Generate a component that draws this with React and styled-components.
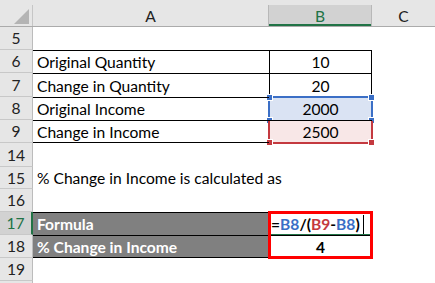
import React from 'react';
import styled, { createGlobalStyle } from "styled-components";

const Global = createGlobalStyle`
  html, body { margin: 0; padding: 0; background: #ffffff; }
  body { font-family: Lato, "Liberation Sans", sans-serif; }
`;

const COLS = "33px 236px 103px 1fr";

const rows = [
  { n: 5, h: 23 },
  { n: 6, h: 23, a: "Original Quantity", b: "10", boxed: true },
  { n: 7, h: 24, a: "Change in Quantity", b: "20", boxed: true },
  { n: 8, h: 23, a: "Original Income", b: "2000", boxed: true, sel: "blue" },
  { n: 9, h: 23, a: "Change in Income", b: "2500", boxed: true, sel: "red", last: true },
  { n: 14, h: 24 },
  { n: 15, h: 22, a: "% Change in Income is calculated as", spill: true },
  { n: 16, h: 23 },
  { n: 17, h: 23, a: "Formula", dark: true, formula: true, active: true },
  { n: 18, h: 23, a: "% Change in Income", b: "4", dark: true, bold: true, last: true },
  { n: 19, h: 23 },
];

function App() {
  return (
    <>
      <Global />
      <Sheet>
        <TopStrip />
        <HeaderRow>
          <Corner><Triangle /></Corner>
          <ColHead>A</ColHead>
          <ColHead $selected>B</ColHead>
          <ColHead $last>C</ColHead>
        </HeaderRow>
        {rows.map((r) => (
          <Row key={r.n} style={{ height: r.h }}>
            <RowHead $selected={r.active}>{r.n}</RowHead>
            <CellA $boxed={r.boxed || r.dark} $last={r.last} $dark={r.dark} $spill={r.spill}>
              {r.a}
            </CellA>
            <CellB $boxed={r.boxed || r.dark} $last={r.last} $sel={r.sel} $bold={r.bold}>
              {r.formula ? (
                <Formula>
                  =<Ref $c="#3a6fc6">B8</Ref>/(<Ref $c="#c4393f">B9</Ref>-<Ref $c="#3a6fc6">B8</Ref>)
                  <Caret />
                </Formula>
              ) : (
                r.b
              )}
              {r.sel === "blue" && (
                <Selection $color="#3b6fc6">
                  <Handle $color="#3b6fc6" $top $left />
                  <Handle $color="#3b6fc6" $top />
                  <Handle $color="#3b6fc6" $left />
                  <Handle $color="#3b6fc6" />
                </Selection>
              )}
              {r.sel === "red" && (
                <Selection $color="#c4393f" $noTop>
                  <Handle $color="#c4393f" $left />
                  <Handle $color="#c4393f" />
                </Selection>
              )}
              {r.active && (
                <>
                  <ActiveLine />
                  <RedBox />
                </>
              )}
            </CellB>
            <CellC />
          </Row>
        ))}
        <RowTail>
          <RowHead />
        </RowTail>
      </Sheet>
    </>
  );
}

export default App;

const Sheet = styled.div`
  width: 435px;
  height: 283px;
  overflow: hidden;
  font-size: 15.6px;
  color: #000;
`;

const TopStrip = styled.div`
  height: 5px;
  background: #e6e6e6;
`;

const HeaderRow = styled.div`
  display: grid;
  grid-template-columns: ${COLS};
  height: 22px;
  background: #e6e6e6;
  border-bottom: 1px solid #ababab;
  box-sizing: border-box;
`;

const Corner = styled.div`
  position: relative;
  border-right: 1px solid #c6c6c6;
`;

const Triangle = styled.div`
  position: absolute;
  right: 3px;
  bottom: 2px;
  width: 0;
  height: 0;
  border-left: 15px solid transparent;
  border-bottom: 15px solid #b4b4b4;
`;

const ColHead = styled.div`
  display: flex;
  align-items: center;
  justify-content: center;
  font-size: 15.6px;
  border-right: ${(p) => (p.$last ? "none" : "1px solid #b8b8b8")};
  background: ${(p) => (p.$selected ? "#d2d2d2" : "transparent")};
  box-shadow: ${(p) => (p.$selected ? "inset 0 -2px 0 #217346" : "none")};
  color: ${(p) => (p.$selected ? "#217346" : "#222")};
`;

const Row = styled.div`
  display: grid;
  grid-template-columns: ${COLS};
`;

const RowTail = styled.div`
  display: grid;
  grid-template-columns: ${COLS};
  height: 10px;
`;

const RowHead = styled.div`
  display: flex;
  align-items: center;
  justify-content: center;
  background: ${(p) => (p.$selected ? "#d2d2d2" : "#e6e6e6")};
  border-bottom: 1px solid #c8c8c8;
  border-right: ${(p) => (p.$selected ? "2px solid #217346" : "1px solid #bcbcbc")};
  box-sizing: border-box;
  font-size: 15.6px;
  color: ${(p) => (p.$selected ? "#217346" : "#222")};
`;

const CellA = styled.div`
  display: flex;
  align-items: center;
  padding-left: 4px;
  white-space: nowrap;
  box-sizing: border-box;
  position: relative;
  z-index: 1;
  overflow: ${(p) => (p.$spill ? "visible" : "hidden")};
  border-top: ${(p) => (p.$boxed ? "1px solid #000" : "none")};
  border-bottom: ${(p) => (p.$last ? "1px solid #000" : "none")};
  background: ${(p) => (p.$dark ? "#808080" : "transparent")};
  color: ${(p) => (p.$dark ? "#fff" : "#000")};
  font-weight: ${(p) => (p.$dark ? 700 : 400)};
`;

const CellB = styled.div`
  position: relative;
  display: flex;
  align-items: center;
  justify-content: center;
  box-sizing: border-box;
  border-top: ${(p) => (p.$boxed ? "1px solid #000" : "none")};
  border-bottom: ${(p) => (p.$last ? "1px solid #000" : "none")};
  border-left: ${(p) => (p.$boxed ? "1px solid #000" : "none")};
  border-right: ${(p) => (p.$boxed ? "1px solid #000" : "none")};
  background: ${(p) =>
    p.$sel === "blue" ? "#dae3f3" : p.$sel === "red" ? "#f8e7e7" : "transparent"};
  font-weight: ${(p) => (p.$bold ? 700 : 400)};
`;

const CellC = styled.div``;

const Formula = styled.div`
  position: absolute;
  left: 1px;
  top: 0;
  bottom: 0;
  display: flex;
  align-items: center;
  font-weight: 700;
  white-space: nowrap;
`;

const Ref = styled.span`
  color: ${(p) => p.$c};
`;

const Caret = styled.span`
  display: inline-block;
  width: 1px;
  height: 19px;
  margin-left: 3px;
  background: #000;
`;

const Selection = styled.div`
  position: absolute;
  left: -2px;
  right: -2px;
  top: ${(p) => (p.$noTop ? "0" : "-2px")};
  bottom: -2px;
  border: 2px solid ${(p) => p.$color};
  border-top-width: ${(p) => (p.$noTop ? "0" : "2px")};
  pointer-events: none;
`;

const Handle = styled.div`
  position: absolute;
  width: 5px;
  height: 5px;
  background: ${(p) => p.$color};
  border: 1px solid #fff;
  ${(p) => (p.$top ? "top: -4px;" : "bottom: -4px;")}
  ${(p) => (p.$left ? "left: -4px;" : "right: -4px;")}
`;

const ActiveLine = styled.div`
  position: absolute;
  left: 0;
  right: 0;
  bottom: -1px;
  height: 2px;
  background: #217346;
`;

const RedBox = styled.div`
  position: absolute;
  left: -2px;
  right: -2px;
  top: -2px;
  height: 48px;
  border: 3px solid #ff0000;
  box-sizing: border-box;
  z-index: 2;
`;
